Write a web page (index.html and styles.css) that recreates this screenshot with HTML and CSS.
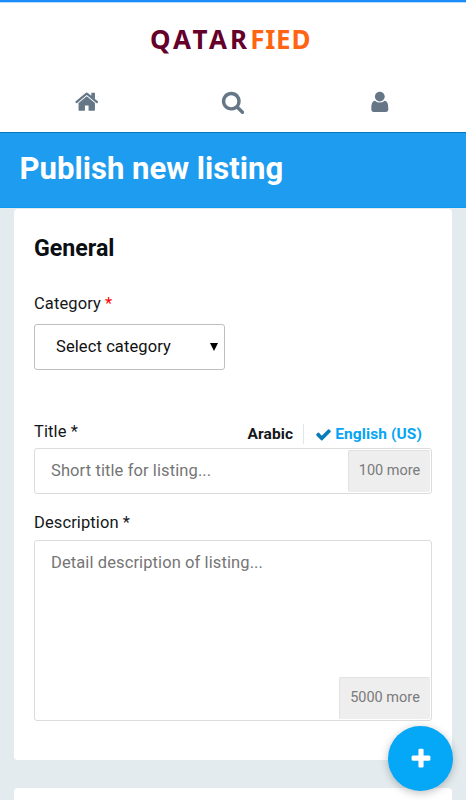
FILE: index.html
```html
<!DOCTYPE html>
<html lang="en">
<head>
<meta charset="utf-8">
<title>Qatarfied - Publish new listing</title>
<link rel="stylesheet" href="styles.css">
</head>
<body>
<header class="header">
  <div class="logo"><span class="logo-first">QATAR</span><span class="logo-second">FIED</span></div>
  <nav class="nav">
    <a class="nav-item"><svg class="icon-home" viewBox="0 0 1792 1792"><path d="M1472 992v480q0 26-19 45t-45 19h-384v-384h-256v384h-384q-26 0-45-19t-19-45v-480q0-1 .5-3t.5-3l575-474 575 474q1 2 1 6zm223-69l-62 74q-8 9-21 11h-3q-13 0-21-7l-692-577-692 577q-12 8-24 7-13-2-21-11l-62-74q-8-10-7-23.5t11-21.5l719-599q32-26 76-26t76 26l244 204v-195q0-14 9-23t23-9h192q14 0 23 9t9 23v408l219 182q10 8 11 21.5t-7 23.5z"/></svg></a>
    <a class="nav-item"><svg viewBox="0 0 1792 1792"><path d="M1216 832q0-185-131.5-316.5t-316.5-131.5-316.5 131.5-131.5 316.5 131.5 316.5 316.5 131.5 316.5-131.5 131.5-316.5zm512 832q0 52-38 90t-90 38q-54 0-90-38l-343-342q-179 124-399 124-143 0-273.5-55.5t-225-150-150-225-55.5-273.5 55.5-273.5 150-225 225-150 273.5-55.5 273.5 55.5 225 150 150 225 55.5 273.5q0 220-124 399l343 343q37 37 37 90z"/></svg></a>
    <a class="nav-item"><svg viewBox="0 0 24 24"><circle cx="11.8" cy="6.6" r="4.9"/><path d="M6.9 10.7Q11.8 14.4 16.7 10.7C19.4 11.2 20.3 13.6 20.3 19Q20.3 22 17.8 22H5.8Q3.3 22 3.3 19C3.3 13.6 4.2 11.2 6.9 10.7Z"/></svg></a>
  </nav>
</header>
<div class="banner"><h1>Publish new listing</h1></div>
<main class="content">
  <section class="card">
    <h2>General</h2>
    <div class="label category-label">Category <span class="required">*</span></div>
    <div class="select"><span>Select category</span><svg class="arrow" viewBox="0 0 8 8"><path d="M0 0H8L4 8Z"/></svg></div>
    <div class="title-row">
      <div class="label">Title *</div>
      <div class="locales">
        <span class="locale">Arabic</span>
        <span class="locale active"><svg class="check" viewBox="0 0 1792 1792"><path d="M1671 566q0 40-28 68l-724 724-136 136q-28 28-68 28t-68-28l-136-136-362-362q-28-28-28-68t28-68l136-136q28-28 68-28t68 28l294 295 656-657q28-28 68-28t68 28l136 136q28 28 28 68z"/></svg><span class="locale-name">English (US)</span></span>
      </div>
    </div>
    <div class="field title-field"><span class="placeholder">Short title for listing...</span><span class="counter">100 more</span></div>
    <div class="label description-label">Description *</div>
    <div class="field description-field"><span class="placeholder">Detail description of listing...</span><span class="counter">5000 more</span></div>
  </section>
  <section class="card next-card"></section>
</main>
<a class="fab"><svg viewBox="0 0 1792 1792"><path d="M1600 736v192q0 40-28 68t-68 28h-416v416q0 40-28 68t-68 28h-192q-40 0-68-28t-28-68v-416h-416q-40 0-68-28t-28-68v-192q0-40 28-68t68-28h416v-416q0-40 28-68t68-28h192q40 0 68 28t28 68v416h416q40 0 68 28t28 68z"/></svg></a>
</body>
</html>
```
FILE: styles.css
```css
* { box-sizing: border-box; }
body { margin: 0; height: 800px; overflow: hidden; background: #e3ebef; color: #14171a; font: 16.5px/20px Roboto, sans-serif; letter-spacing: 0.1px; }
h1, h2 { margin: 0; letter-spacing: 0; }
.header { height: 132px; background: #fff; border-top: 2px solid #1b8cf8; box-shadow: inset 0 1px #b8dcff; }
.logo { padding-top: 19px; height: 71px; text-align: center; font: bold 26px/36px "Noto Sans", sans-serif; padding-right: 5px; }
.logo-first { color: #65002b; letter-spacing: 3.2px; }
.logo-second { color: #ff6413; letter-spacing: 0.7px; }
.nav { display: flex; padding: 17px 13px 0; }
.nav-item { flex: 1; display: flex; justify-content: center; }
.nav-item svg { width: 24px; height: 24px; fill: #657786; }
.nav-item .icon-home { width: 25.5px; height: 25.5px; margin-top: -1px; }
.banner { height: 76px; padding: 16px 19.5px 14px; background: #1e9cef; border-top: 1px solid #0874b9; border-bottom: 1px solid #0c9bf4; color: #fff; }
h1 { font-size: 31.1px; line-height: 40px; }
.content { padding: 1px 14px 0; }
.card { height: 551px; padding: 25px 20px; background: #fff; border-radius: 4px; }
.next-card { height: 12px; padding: 0; margin-top: 28px; border-radius: 4px 4px 0 0; }
h2 { font-size: 23.2px; line-height: 28px; color: #0b0f13; }
.label { height: 20px; }
.category-label { margin-top: 32px; }
.required { color: #f00; }
.select { width: 191px; height: 46px; margin-top: 10px; border: 1px solid #bfbfbf; border-radius: 3px; display: flex; align-items: center; justify-content: space-between; padding: 0 6px 0 21px; color: #111; }
.arrow { width: 8px; height: 8px; }
.title-row { margin-top: 52px; display: flex; justify-content: space-between; height: 26px; }
.locales { display: flex; align-items: flex-start; padding-top: 2px; margin-right: 10px; font-size: 15.5px; font-weight: bold; }
.locale { display: flex; align-items: center; height: 20px; }
.active { margin-left: 10px; padding-left: 11px; border-left: 1px solid #e3e6e8; color: #05a5f5; }
.check { width: 17px; height: 17px; fill: #087bb8; margin-right: 3px; }
.field { border: 1px solid #dcdcdc; border-radius: 3px; display: flex; justify-content: space-between; width: 398px; padding: 1px; }
.title-field { height: 46px; }
.placeholder { color: #757575; padding: 11px 0 0 15px; }
.counter { background: #eee; color: #7a7a7a; border: 1px solid #e2e2e2; border-right: 0; border-bottom: 0; border-radius: 2px; width: 82px; height: 42px; font-size: 14.5px; line-height: 40px; text-align: center; letter-spacing: 0; }
.description-label { margin-top: 19px; }
.description-field { height: 181px; margin-top: 7px; }
.description-field .counter { width: 91px; align-self: flex-end; }
.fab { position: absolute; left: 388px; top: 726px; width: 65px; height: 65px; border-radius: 50%; background: #05a7f7; box-shadow: 0 2px 8px rgba(0,0,0,.25); display: flex; align-items: center; justify-content: center; }
.fab svg { width: 24px; height: 24px; fill: #fff; }
```
